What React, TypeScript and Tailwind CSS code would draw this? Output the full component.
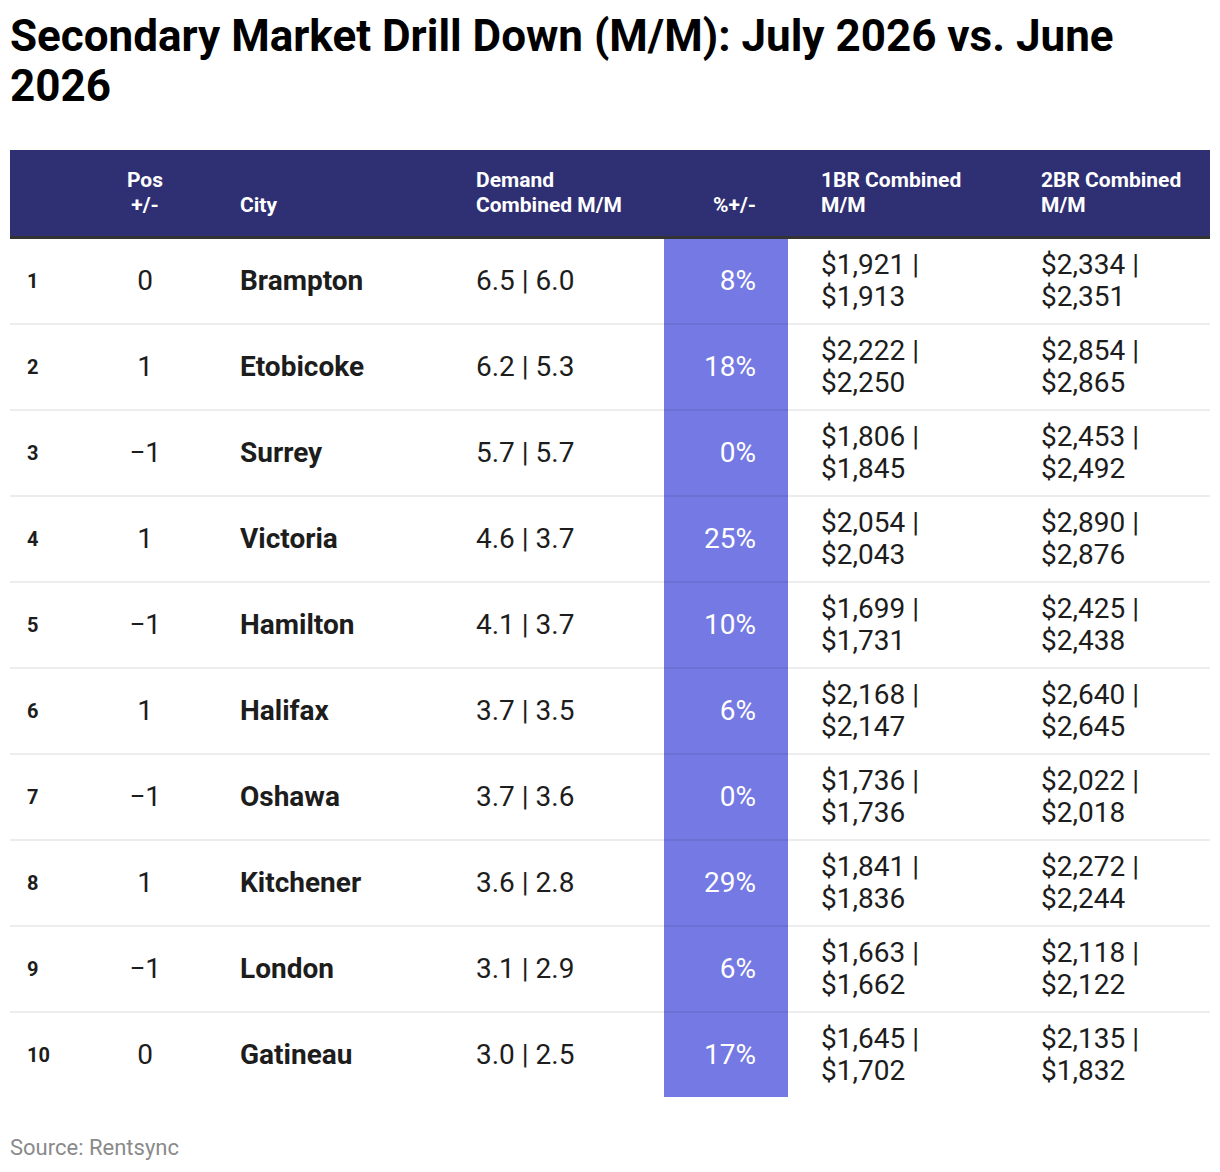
import React from 'react';

interface Row {
  rank: number;
  pos: string;
  city: string;
  demand: string;
  pct: string;
  br1: [string, string];
  br2: [string, string];
}

const rows: Row[] = [
  { rank: 1, pos: '0', city: 'Brampton', demand: '6.5 | 6.0', pct: '8%', br1: ['$1,921 |', '$1,913'], br2: ['$2,334 |', '$2,351'] },
  { rank: 2, pos: '1', city: 'Etobicoke', demand: '6.2 | 5.3', pct: '18%', br1: ['$2,222 |', '$2,250'], br2: ['$2,854 |', '$2,865'] },
  { rank: 3, pos: '−1', city: 'Surrey', demand: '5.7 | 5.7', pct: '0%', br1: ['$1,806 |', '$1,845'], br2: ['$2,453 |', '$2,492'] },
  { rank: 4, pos: '1', city: 'Victoria', demand: '4.6 | 3.7', pct: '25%', br1: ['$2,054 |', '$2,043'], br2: ['$2,890 |', '$2,876'] },
  { rank: 5, pos: '−1', city: 'Hamilton', demand: '4.1 | 3.7', pct: '10%', br1: ['$1,699 |', '$1,731'], br2: ['$2,425 |', '$2,438'] },
  { rank: 6, pos: '1', city: 'Halifax', demand: '3.7 | 3.5', pct: '6%', br1: ['$2,168 |', '$2,147'], br2: ['$2,640 |', '$2,645'] },
  { rank: 7, pos: '−1', city: 'Oshawa', demand: '3.7 | 3.6', pct: '0%', br1: ['$1,736 |', '$1,736'], br2: ['$2,022 |', '$2,018'] },
  { rank: 8, pos: '1', city: 'Kitchener', demand: '3.6 | 2.8', pct: '29%', br1: ['$1,841 |', '$1,836'], br2: ['$2,272 |', '$2,244'] },
  { rank: 9, pos: '−1', city: 'London', demand: '3.1 | 2.9', pct: '6%', br1: ['$1,663 |', '$1,662'], br2: ['$2,118 |', '$2,122'] },
  { rank: 10, pos: '0', city: 'Gatineau', demand: '3.0 | 2.5', pct: '17%', br1: ['$1,645 |', '$1,702'], br2: ['$2,135 |', '$1,832'] },
];

const cols = 'grid grid-cols-[100px_70px_279px_205px_124px_220px_202px]';

const App: React.FC = () => {
  return (
    <div className="min-h-[1172px] bg-white px-[10px] pt-[11px] font-['Roboto',sans-serif] text-[#1d1d1d]">
      <h1 className="mb-[39px] text-[44px] font-bold leading-[50px] text-black">
        Secondary Market Drill Down (M/M): July 2026 vs. June 2026
      </h1>

      <div className="w-[1200px]">
        {/* Header */}
        <div className={`${cols} h-[89px] items-end border-b-[3px] border-[#333333] bg-[#2f2f73] pb-[18px] text-[21px] font-bold leading-[25px] text-white`}>
          <div />
          <div className="text-center">
            Pos
            <br />
            +/-
          </div>
          <div className="pl-[60px]">City</div>
          <div className="pl-[17px]">
            Demand
            <br />
            Combined M/M
          </div>
          <div className="pr-[32px] text-right">%+/-</div>
          <div className="pl-[33px]">
            1BR Combined
            <br />
            M/M
          </div>
          <div className="pl-[33px]">
            2BR Combined
            <br />
            M/M
          </div>
        </div>

        {/* Body */}
        {rows.map((r, i) => {
          const last = i === rows.length - 1;
          const cell = `flex items-center ${last ? 'h-[84px]' : 'h-[86px] border-b-2 border-black/[0.07]'}`;
          return (
            <div key={r.rank} className={`${cols} text-[28px] leading-[32px]`}>
              <div className={`${cell} pl-[17px] text-[20px] font-bold`}>{r.rank}</div>
              <div className={`${cell} justify-center`}>{r.pos}</div>
              <div className={`${cell} pl-[60px] font-bold`}>{r.city}</div>
              <div className={`${cell} pl-[17px]`}>{r.demand}</div>
              <div className={`${cell} justify-end bg-[#7479e4] pr-[32px] text-white`}>{r.pct}</div>
              <div className={`${cell} pl-[33px]`}>
                <div>
                  {r.br1[0]}
                  <br />
                  {r.br1[1]}
                </div>
              </div>
              <div className={`${cell} pl-[33px]`}>
                <div>
                  {r.br2[0]}
                  <br />
                  {r.br2[1]}
                </div>
              </div>
            </div>
          );
        })}
      </div>

      <p className="mt-[37px] text-[22px] leading-[28px] text-[#8a8a8a]">Source: Rentsync</p>
    </div>
  );
};

export default App;
